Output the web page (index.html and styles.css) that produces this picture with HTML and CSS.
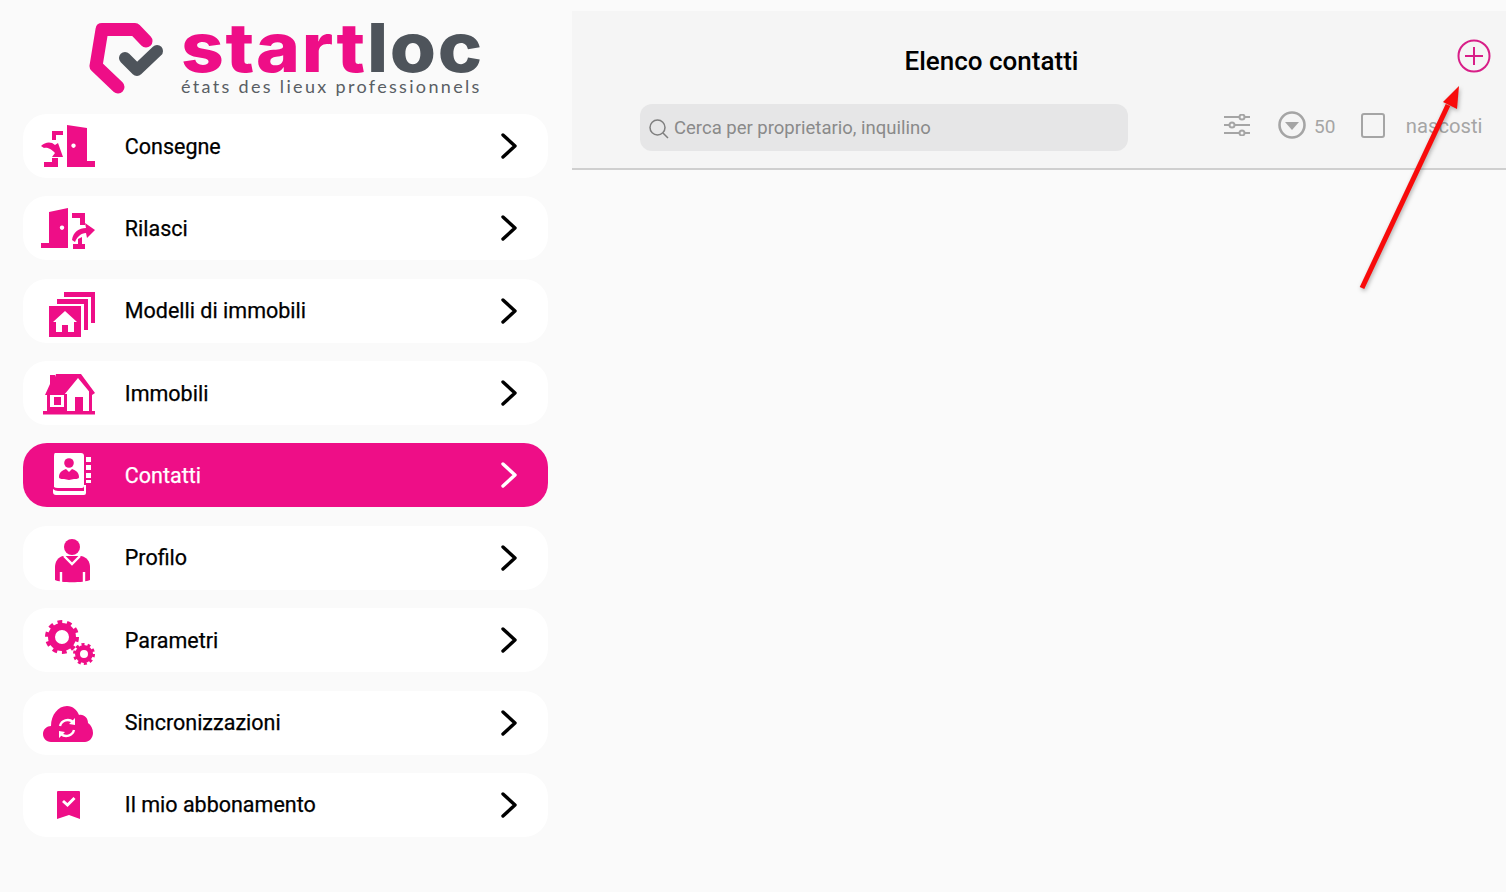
FILE: index.html
```html
<!DOCTYPE html>
<html lang="it">
<head>
<meta charset="UTF-8">
<meta name="viewport" content="width=device-width, initial-scale=1.0">
<title>Elenco contatti</title>
<link rel="stylesheet" href="styles.css">
</head>
<body>
<div class="page">
    <aside class="sidebar">
        <div class="logo">
            <svg class="logo-mark" viewBox="0 0 80 72" fill="none" stroke-linecap="round" stroke-linejoin="round">
                <path d="M61 18 L50 6.500 L17 6.500 L11 43 L33 64" stroke="#ee0e87" stroke-width="13"/>
                <path d="M40 35 L52 47 L72 28" stroke="#4e545b" stroke-width="12"/>
            </svg>
            <div class="logo-text">
                <div class="logo-name"><span class="logo-start">start</span>loc</div>
                <div class="logo-sub">états des lieux professionnels</div>
            </div>
        </div>

        <nav class="menu">
            <a class="menu-item">
                <svg class="menu-icon" viewBox="0 0 60 64">
                    <path d="M29 11 L49 14 L49 47 L57 47 L57 53 L29 53 Z"/>
                    <path class="hole" d="M35.500 29.500 a2.200 2.200 0 1 0 0.010 0 Z"/>
                    <path d="M14 17 L25 17 L25 21 L18 21 L18 26 L14 26 Z"/>
                    <path d="M14 44 L20 44 L20 53 L6 53 L6 48 L14 48 Z"/>
                    <path d="M3 32 C7 28 13 27 17 31 L20 29 L25 43 L14 43 L17 39 C13 34 8 33 6 34 Z"/>
                </svg>
                <span class="menu-label">Consegne</span>
                <svg class="menu-arrow" viewBox="0 0 20 30"><path d="M5 4 L17 15 L5 26"/></svg>
            </a>
            <a class="menu-item">
                <svg class="menu-icon" viewBox="0 0 60 64">
                    <path d="M11 16 L30 12 L30 52 L3 52 L3 47 L11 47 Z"/>
                    <path class="hole" d="M24 29.500 a2.200 2.200 0 1 0 0.010 0 Z"/>
                    <path d="M34 17 L47 17 L47 29 L42 29 L42 22 L34 22 Z"/>
                    <path d="M40 43 L44 41 L44 48 L47 48 L47 53 L35 53 L35 48 L40 48 Z"/>
                    <path d="M34 44 C35 36 41 32 48 32 L47 27 L57 34 L49 42 L48 37 C43 37 39 41 37 46 Z"/>
                </svg>
                <span class="menu-label">Rilasci</span>
                <svg class="menu-arrow" viewBox="0 0 20 30"><path d="M5 4 L17 15 L5 26"/></svg>
            </a>
            <a class="menu-item">
                <svg class="menu-icon" viewBox="0 0 60 64">
                    <path d="M26 13 H57 V44 H53 V18 H26 Z"/>
                    <path d="M19 20 H50 V51 H46 V25 H19 Z"/>
                    <path d="M11 27 H43 V58 H11 Z"/>
                    <path class="hole" d="M27 32 L39 43 H36 V53 H30 V46 H24 V53 H18 V43 H15 Z"/>
                </svg>
                <span class="menu-label">Modelli di immobili</span>
                <svg class="menu-arrow" viewBox="0 0 20 30"><path d="M5 4 L17 15 L5 26"/></svg>
            </a>
            <a class="menu-item">
                <svg class="menu-icon" viewBox="0 0 60 64">
                    <path d="M5 50 H57 V53.500 H5 Z"/>
                    <path d="M12 14 H17 V16 L18 13 H43 L57 32 L54 34 L40 17 L26 34 H7 L12 23 Z"/>
                    <path d="M9 33 H12 V50 H9 Z M26 33 H29 V50 H26 Z M51 30 H54 V50 H51 Z"/>
                    <path d="M16 36 H23 V44 H16 Z M37 36 H45 V50 H37 Z"/>
                    <path d="M11 46 H28 V50 H11 Z"/>
                </svg>
                <span class="menu-label">Immobili</span>
                <svg class="menu-arrow" viewBox="0 0 20 30"><path d="M5 4 L17 15 L5 26"/></svg>
            </a>
            <a class="menu-item active">
                <svg class="menu-icon" viewBox="0 0 60 64">
                    <path d="M17 10 H43 Q46 10 46 13 V43 Q46 45 44 45 H20 Q17 45 16 44 V13 Q16 10 17 10 Z"/>
                    <path d="M15 46 Q17 48 20 48 H46 V42 H48 V50 Q48 52 46 52 H18 Q15 52 15 49 Z"/>
                    <path d="M48 14 H53 V19 H48 Z M48 22 H53 V27 H48 Z M48 30 H53 V35 H48 Z M48 37 H53 V40 H48 Z"/>
                    <circle class="hole" cx="31" cy="20" r="4.800"/>
                    <path class="hole" d="M21 34 C21 29 25 27 28 26 L31 29 L34 26 C37 27 41 29 41 34 C41 36 38 36 36 36 L31 37 L26 36 C24 36 21 36 21 34 Z"/>
                </svg>
                <span class="menu-label">Contatti</span>
                <svg class="menu-arrow" viewBox="0 0 20 30"><path d="M5 4 L17 15 L5 26"/></svg>
            </a>
            <a class="menu-item">
                <svg class="menu-icon" viewBox="0 0 60 64">
                    <circle cx="34" cy="21" r="8"/>
                    <path d="M25 30 H43 C49 31 52 36 52 41 V54 C46 57 22 57 17 54 V41 C17 36 20 31 25 30 Z"/>
                    <path class="sync" d="M26 30 L34 38 L42 30 M23 46 V56 M46 46 V56"/>
                </svg>
                <span class="menu-label">Profilo</span>
                <svg class="menu-arrow" viewBox="0 0 20 30"><path d="M5 4 L17 15 L5 26"/></svg>
            </a>
            <a class="menu-item">
                <svg class="menu-icon" viewBox="0 0 60 64">
                    <circle class="teeth" cx="24" cy="29" r="15" stroke-width="4" stroke-dasharray="4.700 4.700"/>
                    <circle cx="24" cy="29" r="10.500" class="ring" stroke-width="7"/>
                    <circle class="teeth" cx="46" cy="46" r="9.500" stroke-width="3" stroke-dasharray="3 3"/>
                    <circle cx="46" cy="46" r="6.500" class="ring" stroke-width="5"/>
                </svg>
                <span class="menu-label">Parametri</span>
                <svg class="menu-arrow" viewBox="0 0 20 30"><path d="M5 4 L17 15 L5 26"/></svg>
            </a>
            <a class="menu-item">
                <svg class="menu-icon" viewBox="0 0 60 64">
                    <path d="M13 51 C8 51 5 47 5 43 C5 38 9 35 13 35 C13 24 20 15 29 15 C35 15 39 19 41 24 C46 23 50 27 50 32 C53 34 55 38 55 42 C55 47 51 51 47 51 Z"/>
                    <path class="sync" d="M22 35 A8 8 0 0 1 35 31"/>
                    <path class="sync" d="M36 39 A8 8 0 0 1 23 43"/>
                    <path class="hole" d="M37 27 L37 34 L31 33 Z M21 47 L21 40 L27 41 Z"/>
                </svg>
                <span class="menu-label">Sincronizzazioni</span>
                <svg class="menu-arrow" viewBox="0 0 20 30"><path d="M5 4 L17 15 L5 26"/></svg>
            </a>
            <a class="menu-item">
                <svg class="menu-icon" viewBox="0 0 60 64">
                    <path d="M20 18 H41 Q42 18 42 19 V46 L31 42 L19 46 V19 Q19 18 20 18 Z"/>
                    <path class="check" d="M25 28 L29.500 32 L36.500 25"/>
                </svg>
                <span class="menu-label">Il mio abbonamento</span>
                <svg class="menu-arrow" viewBox="0 0 20 30"><path d="M5 4 L17 15 L5 26"/></svg>
            </a>
        </nav>
    </aside>

    <main class="main">
        <header class="head">
            <div class="head-top">
                <h1 class="title">Elenco contatti</h1>
                <svg class="add-btn" viewBox="0 0 34 34" fill="none">
                    <circle cx="17" cy="17" r="15.500" stroke-width="2"/>
                    <path d="M17 8 V26 M8 17 H26" stroke-width="2"/>
                </svg>
            </div>
            <div class="toolbar">
                <div class="search">
                    <svg class="search-icon" viewBox="0 0 20 20" fill="none">
                        <circle cx="8.500" cy="8.500" r="7.500"/>
                        <path d="M14 14 L19 19"/>
                    </svg>
                    <span>Cerca per proprietario, inquilino</span>
                </div>
                <svg class="filter-icon" viewBox="0 0 26 22" fill="none">
                    <path d="M0 3 H26 M0 11 H26 M0 19 H26"/>
                    <circle cx="18" cy="3" r="2.500"/>
                    <circle cx="8" cy="11" r="2.500"/>
                    <circle cx="18" cy="19" r="2.500"/>
                </svg>
                <svg class="sort-icon" viewBox="0 0 28 28" fill="none">
                    <circle cx="14" cy="14" r="12.500"/>
                    <path class="sort-tri" d="M7 11 H21 L14 19 Z"/>
                </svg>
                <span class="count">50</span>
                <span class="checkbox"></span>
                <span class="hidden-label">nascosti</span>
            </div>
        </header>
    </main>
</div>

<svg class="annotation" viewBox="0 0 110 215">
    <path class="annotation-line" d="M7 208 L93 25"/>
    <path class="annotation-head" d="M104 6 L102 29 L88 22 Z"/>
</svg>
</body>
</html>
```

FILE: styles.css
```css
body {
    margin: 0;
    font-family: Roboto, "Liberation Sans", sans-serif;
    background-color: #fafafa;
    color: #000;
}

.page {
    display: flex;
    height: 892px;
    overflow: hidden;
}

.sidebar {
    width: 572px;
    flex-shrink: 0;
    box-sizing: border-box;
    padding: 0 24px 0 23px;
}

.logo {
    display: flex;
    height: 114px;
    box-sizing: border-box;
    padding: 23px 0 0 62px;
}

.logo-mark {
    width: 80px;
    height: 72px;
    flex-shrink: 0;
}

.logo-text {
    margin-left: 16px;
    margin-top: -4px;
}

.logo-name {
    font-family: Inter, sans-serif;
    font-size: 68px;
    font-weight: 800;
    line-height: 56px;
    letter-spacing: 1.500px;
    color: #4e545b;
    white-space: nowrap;
    transform: scaleX(1.100);
    transform-origin: left center;
}

.logo-start {
    color: #ee0e87;
}

.logo-sub {
    font-family: Lato, sans-serif;
    font-size: 18px;
    line-height: 20px;
    letter-spacing: 2.330px;
    color: #595e64;
    margin-top: 1px;
    white-space: nowrap;
}

.menu {
    display: flex;
    flex-direction: column;
    gap: 18.370px;
}

.menu-item {
    display: flex;
    align-items: center;
    height: 64px;
    padding-left: 15px;
    padding-right: 30px;
    background-color: #fff;
    border-radius: 24px;
    color: #ee0e87;
}

.menu-item.active {
    background-color: #ee0e87;
    color: #fff;
}

.menu-icon {
    width: 60px;
    height: 64px;
    flex-shrink: 0;
    fill: currentColor;
}

.menu-icon .hole {
    fill: #fff;
}

.menu-item.active .menu-icon .hole {
    fill: #ee0e87;
}

.menu-icon .teeth {
    fill: none;
    stroke: currentColor;
}

.menu-icon .ring {
    fill: none;
    stroke: currentColor;
}

.menu-icon .sync {
    fill: none;
    stroke: #fff;
    stroke-width: 2.400;
}

.menu-icon .check {
    fill: none;
    stroke: #fff;
    stroke-width: 3;
}

.menu-label {
    flex: 1;
    margin-left: 26.800px;
    font-size: 21.500px;
    font-weight: 400;
    -webkit-text-stroke: 0.25px currentColor;
    color: #000;
}

.menu-item.active .menu-label {
    color: #fff;
}

.menu-arrow {
    width: 20px;
    height: 30px;
    flex-shrink: 0;
    fill: none;
    stroke: #000;
    stroke-width: 3.400;
    stroke-linecap: round;
    stroke-linejoin: round;
}

.menu-item.active .menu-arrow {
    stroke: #fff;
}

.main {
    flex: 1;
    padding-top: 11px;
}

.head {
    height: 157px;
    background-color: #f5f5f5;
    border-bottom: 2px solid #cfcfcf;
}

.head-top {
    display: flex;
    align-items: center;
    height: 93px;
    padding-right: 15px;
}

.title {
    flex: 1;
    margin: 6px 46px 0 0;
    font-size: 26px;
    font-weight: 500;
    line-height: 34px;
    text-align: center;
}

.add-btn {
    width: 34px;
    height: 34px;
    margin-bottom: 4px;
    stroke: #d81f88;
}

.toolbar {
    display: flex;
    align-items: center;
    padding-left: 68px;
    color: #a5a5a5;
}

.search {
    display: flex;
    align-items: center;
    width: 488px;
    height: 47px;
    padding-left: 9px;
    box-sizing: border-box;
    background-color: #e6e6e7;
    border-radius: 12px;
    color: #8a8a8a;
    font-size: 18.500px;
}

.search-icon {
    width: 20px;
    height: 20px;
    margin-right: 5px;
    margin-top: 3px;
    stroke: #7f7f7f;
    stroke-width: 1.500;
}

.filter-icon {
    width: 26px;
    height: 22px;
    margin-left: 96px;
    margin-top: -6px;
    stroke: #a5a5a5;
    stroke-width: 2;
}

.filter-icon circle {
    fill: #f5f5f5;
}

.sort-icon {
    width: 28px;
    height: 28px;
    margin-left: 28px;
    margin-top: -5px;
    stroke: #a5a5a5;
    stroke-width: 2.600;
}

.sort-tri {
    fill: #a5a5a5;
    stroke: none;
}

.count {
    margin-left: 8px;
    font-size: 19px;
    margin-top: -2px;
}

.checkbox {
    width: 20px;
    height: 21px;
    margin-left: 26px;
    margin-top: -5px;
    border: 2.500px solid #a5a5a5;
    border-radius: 3px;
}

.hidden-label {
    margin-left: 20.500px;
    font-size: 20.200px;
    margin-top: -4px;
}

/* freccia rossa sopra la testata */
.annotation {
    position: absolute;
    left: 1355px;
    top: 80px;
    width: 110px;
    height: 215px;
    filter: drop-shadow(1px 2px 2px rgba(0, 0, 0, 0.3));
}

.annotation-line {
    fill: none;
    stroke: #f80b0b;
    stroke-width: 5;
}

.annotation-head {
    fill: #f80b0b;
}
```
